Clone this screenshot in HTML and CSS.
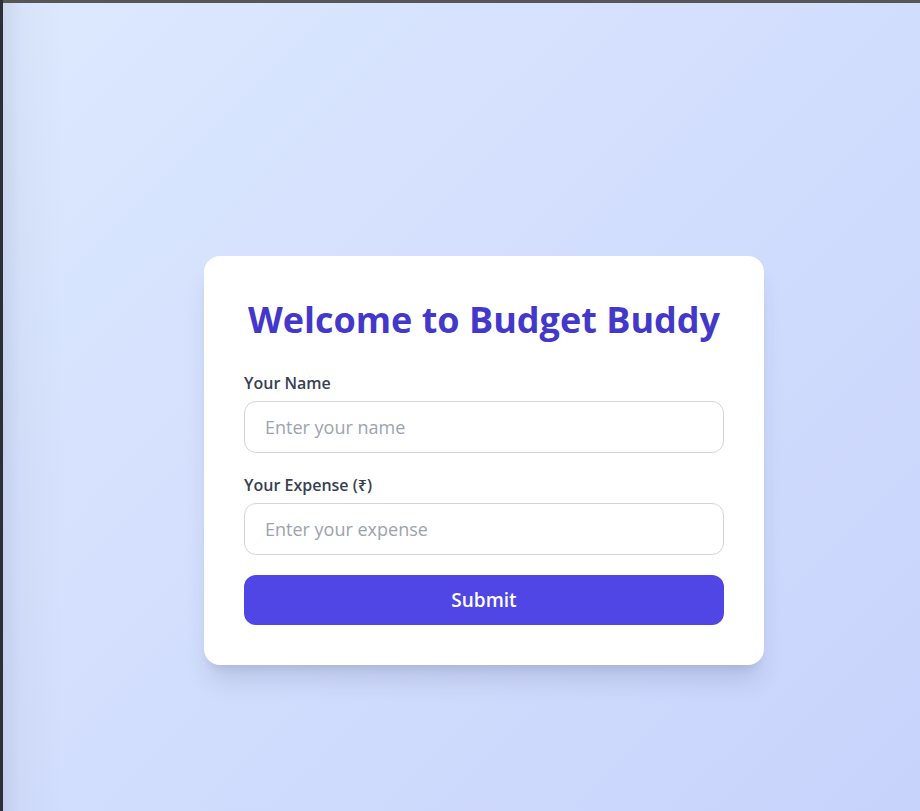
FILE: index.html
```html
<!DOCTYPE html>
<html lang="en">
<head>
<meta charset="utf-8">
<title>Budget Buddy</title>
<link rel="stylesheet" href="styles.css">
</head>
<body>
<div class="frame">
  <div class="edge-shade"></div>
  <main class="stage">
    <form class="card" onsubmit="return false">
      <h1 class="title">Welcome to Budget Buddy</h1>
      <div class="field">
        <label class="label" for="name">Your Name</label>
        <input class="input" id="name" type="text" placeholder="Enter your name">
      </div>
      <div class="field">
        <label class="label" for="expense">Your Expense (₹)</label>
        <input class="input" id="expense" type="text" placeholder="Enter your expense">
      </div>
      <button class="submit" type="submit">Submit</button>
    </form>
  </main>
</div>
</body>
</html>
```
FILE: styles.css
```css
* { box-sizing: border-box; }
html, body { margin: 0; padding: 0; height: 100%; }
body {
  background: #2b2f36;
  font-family: "Open Sans", "Noto Sans", "Liberation Sans", sans-serif;
  overflow: hidden;
}
.frame {
  position: relative;
  height: 100%;
  border-top: 3px solid #565656;
  margin-left: 3px;
  background: linear-gradient(135deg, #dce9fe 0%, #d3dffd 45%, #c8d3fc 100%);
  overflow: hidden;
}
.edge-shade {
  position: absolute;
  left: 0; top: 0; bottom: 0;
  width: 60px;
  background: linear-gradient(90deg, rgba(120,130,160,0.18) 0%, rgba(120,130,160,0.06) 30%, rgba(120,130,160,0) 100%);
  pointer-events: none;
}
.stage {
  position: relative;
  padding: 253px 0 0 201px;
}
.card {
  width: 560px;
  background: #fff;
  border-radius: 16px;
  padding: 40px;
  box-shadow: 0 20px 25px -5px rgba(40, 50, 90, 0.14), 0 8px 10px -6px rgba(40, 50, 90, 0.12);
  display: flex;
  flex-direction: column;
}
.title {
  margin: 4px 0 31px;
  text-align: center;
  color: #4338ca;
  font-size: 36px;
  line-height: 40px;
  font-weight: 700;
  letter-spacing: 0;
}
.field {
  display: flex;
  flex-direction: column;
  gap: 6px;
  margin-bottom: 20px;
}
.label {
  color: #374151;
  font-size: 16px;
  line-height: 24px;
  font-weight: 600;
}
.input {
  height: 52px;
  width: 100%;
  border: 1px solid #d1d5db;
  border-radius: 12px;
  padding: 0 20px;
  font-family: inherit;
  font-size: 18px;
  color: #111827;
  background: #fff;
  outline: none;
}
.input::placeholder { color: #9ca3af; }
.submit {
  height: 50px;
  width: 100%;
  border: none;
  border-radius: 12px;
  background: #4f46e5;
  color: #fff;
  font-family: inherit;
  font-size: 19px;
  font-weight: 600;
  cursor: pointer;
}
```
